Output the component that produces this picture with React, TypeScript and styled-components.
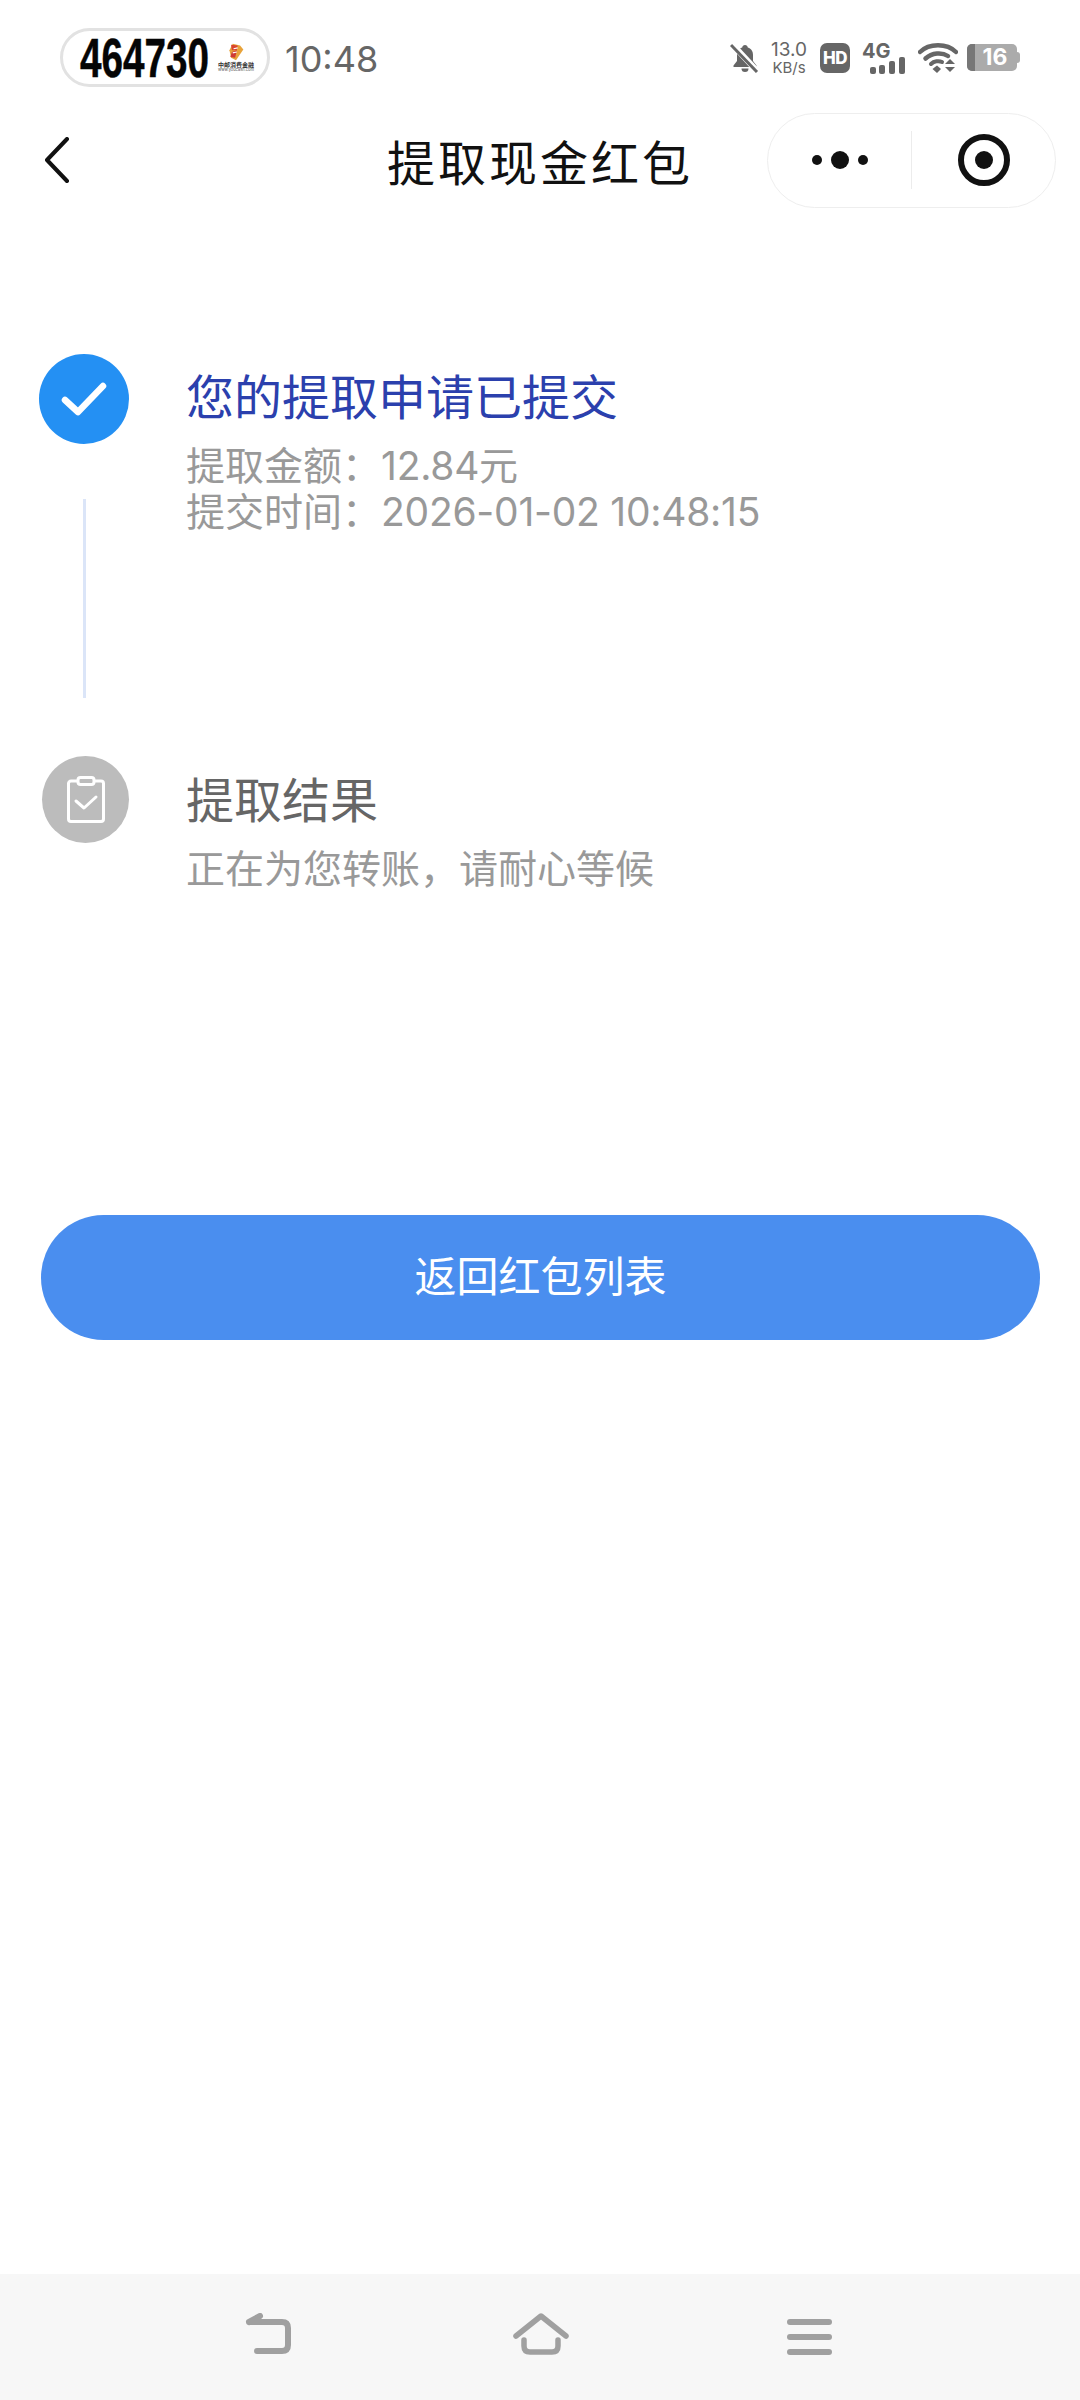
import styled, { createGlobalStyle } from "styled-components";

const GlobalStyle = createGlobalStyle`
  html, body {
    margin: 0;
    padding: 0;
    background: #ffffff;
  }
  * {
    box-sizing: border-box;
  }
`;

const App = () => {
  return (
    <Page>
      <GlobalStyle />
      <StatusBar>
        <CodeBadge>
          <CodeText>464730</CodeText>
          <BrandBlock>
            <svg width="18" height="18" viewBox="0 0 22 22">
              <path d="M7 1 L16 3 L20 8 L11 21 L5 18 L3 9 Z" fill="#e8a33a" />
              <path d="M5 2 L13 3 L12 9 L6 9 Z" fill="#d8432f" />
              <path d="M6 11 L12 9 L10 18 L4 17 Z" fill="#cf3a34" />
              <path d="M8 7 L13 6 M7 12 L12 11" stroke="#fff" strokeWidth="1.4" />
            </svg>
            <BrandName>中邮消费金融</BrandName>
            <BrandUrl>www.youcash.com</BrandUrl>
          </BrandBlock>
        </CodeBadge>
        <Clock>10:48</Clock>
        <StatusIcons>
          <svg width="30" height="30" viewBox="0 0 30 30">
            <path d="M15 2c-1.6 0-2.6 1-2.8 2.4C8.400 5.500 7 8.500 7 12v6l-3.500 4.500V24h23v-1.500L23 18v-6c0-3.500-1.400-6.500-5.200-7.600C17.600 3 16.600 2 15 2z" fill="#666" />
            <path d="M11.500 25.500h7a3.500 3.500 0 0 1-7 0z" fill="#666" />
            <path d="M2 1 L28 29" stroke="#fff" strokeWidth="6" />
            <path d="M1 2 L27 29" stroke="#666" strokeWidth="3" />
          </svg>
          <Speed>
            <SpeedValue>13.0</SpeedValue>
            <SpeedUnit>KB/s</SpeedUnit>
          </Speed>
          <HdBadge>HD</HdBadge>
          <Network>
            <NetworkLabel>4G</NetworkLabel>
            <svg width="36" height="17" viewBox="0 0 36 17">
              <rect x="0" y="10" width="6" height="7" rx="2" fill="#666" />
              <rect x="9" y="8" width="6" height="9" rx="2" fill="#666" />
              <rect x="19" y="4" width="6" height="13" rx="2" fill="#666" />
              <rect x="29" y="0" width="6" height="17" rx="2" fill="#666" />
            </svg>
          </Network>
          <svg width="40" height="30" viewBox="0 0 40 30">
            <path d="M2 9 C11 0 29 0 38 9" fill="none" stroke="#666" strokeWidth="4.500" strokeLinecap="round" />
            <path d="M7.500 15.500 C14 9.500 24 9 30 13" fill="none" stroke="#666" strokeWidth="4.500" strokeLinecap="round" />
            <path d="M13 21 C16 18 21 17.500 24 19" fill="none" stroke="#666" strokeWidth="4" strokeLinecap="round" />
            <path d="M14.500 26 L19 22.500 L23 26 L19 30 Z" fill="#666" />
            <path d="M27 21 L32 16 L37 21 Z" fill="#666" />
            <path d="M27 24 L37 24 L32 29 Z" fill="#666" />
          </svg>
          <Battery>
            <BatteryLevel />
            <BatteryText>16</BatteryText>
            <BatteryCap />
          </Battery>
        </StatusIcons>
      </StatusBar>

      <NavBar>
        <BackButton>
          <svg width="26" height="46" viewBox="0 0 26 46">
            <path d="M23 2 L3 23 L23 44" fill="none" stroke="#111" strokeWidth="4" strokeLinecap="round" strokeLinejoin="round" />
          </svg>
        </BackButton>
        <NavTitle>提取现金红包</NavTitle>
        <Capsule>
          <CapsuleSlot>
            <svg width="58" height="20" viewBox="0 0 58 20">
              <circle cx="6" cy="10" r="5" fill="#111" />
              <circle cx="29" cy="10" r="9" fill="#111" />
              <circle cx="52" cy="10" r="5" fill="#111" />
            </svg>
          </CapsuleSlot>
          <CapsuleDivider />
          <CapsuleSlot>
            <svg width="54" height="54" viewBox="0 0 54 54">
              <circle cx="27" cy="27" r="23" fill="none" stroke="#111" strokeWidth="6" />
              <circle cx="27" cy="27" r="9" fill="#111" />
            </svg>
          </CapsuleSlot>
        </Capsule>
      </NavBar>

      <Steps>
        <Step>
          <Marker>
            <MarkerCircle $size={90} $bg="#2490f3">
              <svg width="46" height="36" viewBox="0 0 46 36">
                <path d="M4 19 L17 31 L42 5" fill="none" stroke="#fff" strokeWidth="6.500" strokeLinecap="round" strokeLinejoin="round" />
              </svg>
            </MarkerCircle>
            <Rail />
          </Marker>
          <StepBody $top={13}>
            <StepTitle $color="#2b40ad">您的提取申请已提交</StepTitle>
            <StepLine>提取金额：<StepValue>12.84元</StepValue></StepLine>
            <StepLine>提交时间：<StepValue>2026-01-02 10:48:15</StepValue></StepLine>
          </StepBody>
        </Step>
        <Step>
          <Marker>
            <MarkerCircle $size={87} $bg="#bcbcbc">
              <svg width="38" height="48" viewBox="0 0 38 48">
                <path d="M11 5 H4 a2.500 2.500 0 0 0 -2.500 2.500 V43 a2.500 2.500 0 0 0 2.500 2.500 H34 a2.500 2.500 0 0 0 2.500 -2.500 V7.500 a2.500 2.500 0 0 0 -2.500 -2.500 H27" fill="none" stroke="#fff" strokeWidth="3" />
                <rect x="11" y="1.500" width="16" height="7" rx="2.500" fill="none" stroke="#fff" strokeWidth="3" />
                <path d="M9 25 L17 32 L29 21" fill="none" stroke="#fff" strokeWidth="3" strokeLinecap="round" strokeLinejoin="round" />
              </svg>
            </MarkerCircle>
          </Marker>
          <StepBody $top={14}>
            <StepTitle $color="#666666">提取结果</StepTitle>
            <StepLine>正在为您转账，请耐心等候</StepLine>
          </StepBody>
        </Step>
      </Steps>

      <BackToList>返回红包列表</BackToList>

      <SystemNav>
        <svg width="50" height="44" viewBox="0 0 50 44">
          <path d="M4 9 L15 3 M4 9 H37 Q43 9 43 15 V32 Q43 38 37 38 H12" fill="none" stroke="#a0a0a0" strokeWidth="6" strokeLinecap="round" strokeLinejoin="round" />
        </svg>
        <svg width="58" height="44" viewBox="0 0 58 44">
          <path d="M4 23 L29 3 L54 23" fill="none" stroke="#a0a0a0" strokeWidth="5.500" strokeLinecap="round" strokeLinejoin="round" />
          <path d="M12 27 V33 Q12 39 18 39 H40 Q46 39 46 33 V27" fill="none" stroke="#a0a0a0" strokeWidth="5.500" strokeLinecap="round" strokeLinejoin="round" />
        </svg>
        <MenuIcon>
          <MenuBar />
          <MenuBar />
          <MenuBar />
        </MenuIcon>
      </SystemNav>
    </Page>
  );
};

const fontStack = `Inter, "Noto Sans CJK SC", sans-serif`;

const Page = styled.div`
  width: 1080px;
  height: 2400px;
  display: flex;
  flex-direction: column;
  background: #ffffff;
  font-family: ${fontStack};
  overflow: hidden;
`;

const StatusBar = styled.div`
  height: 112px;
  padding: 28px 60px 25px 60px;
  display: flex;
  align-items: center;
`;

const CodeBadge = styled.div`
  width: 210px;
  height: 59px;
  border: 3px solid #e2e2e2;
  border-radius: 30px;
  display: flex;
  align-items: center;
  padding-left: 17px;
`;

const CodeText = styled.span`
  width: 127px;
  display: block;
  font-family: "Liberation Sans", sans-serif;
  font-weight: 700;
  font-size: 56px;
  line-height: 54px;
  color: #050505;
  -webkit-text-stroke: 0.5px #050505;
  transform: scaleX(0.69);
  transform-origin: left center;
  white-space: nowrap;
`;

const BrandBlock = styled.div`
  margin-left: 10px;
  width: 38px;
  display: flex;
  flex-direction: column;
  align-items: center;
  line-height: 1;
`;

const BrandName = styled.span`
  font-size: 6px;
  line-height: 7px;
  font-weight: 700;
  color: #333;
  white-space: nowrap;
`;

const BrandUrl = styled.span`
  font-size: 4px;
  line-height: 4px;
  color: #555;
  white-space: nowrap;
`;

const Clock = styled.span`
  margin-left: 15px;
  padding-top: 2px;
  font-size: 36px;
  color: #666666;
`;

const StatusIcons = styled.div`
  margin-left: auto;
  display: flex;
  align-items: center;
`;

const Speed = styled.div`
  margin-left: 11px;
  width: 36px;
  display: flex;
  flex-direction: column;
  align-items: center;
  color: #666;
`;

const SpeedValue = styled.span`
  font-size: 19px;
  line-height: 19px;
`;

const SpeedUnit = styled.span`
  font-size: 15px;
  line-height: 17px;
`;

const HdBadge = styled.div`
  margin-left: 13px;
  width: 30px;
  height: 30px;
  border-radius: 7px;
  background: #666;
  color: #fff;
  font-size: 17px;
  font-weight: 800;
  line-height: 30px;
  text-align: center;
  letter-spacing: -0.5px;
`;

const Network = styled.div`
  margin-left: 12px;
  margin-right: 12px;
  width: 44px;
  height: 32px;
  display: flex;
  flex-direction: column;
  align-items: flex-start;
  position: relative;
  svg {
    position: absolute;
    right: 0;
    bottom: 0;
  }
`;

const NetworkLabel = styled.span`
  font-size: 20px;
  line-height: 18px;
  font-weight: 700;
  color: #666;
`;

const Battery = styled.div`
  margin-left: 9px;
  margin-right: 3px;
  width: 50px;
  height: 27px;
  position: relative;
  background: #ababab;
  border-radius: 5px;
  display: flex;
  align-items: center;
  justify-content: center;
`;

const BatteryLevel = styled.div`
  position: absolute;
  left: 0;
  top: 0;
  bottom: 0;
  width: 8px;
  background: #777;
  border-radius: 5px 0 0 5px;
`;

const BatteryText = styled.span`
  font-size: 23px;
  font-weight: 700;
  color: #fff;
  line-height: 27px;
  margin-left: 6px;
`;

const BatteryCap = styled.div`
  position: absolute;
  right: -3px;
  top: 8px;
  width: 3px;
  height: 11px;
  background: #ababab;
  border-radius: 0 3px 3px 0;
`;

const NavBar = styled.div`
  height: 96px;
  padding: 0 24px 0 44px;
  display: flex;
  align-items: center;
  position: relative;
`;

const BackButton = styled.div`
  display: flex;
  align-items: center;
`;

const NavTitle = styled.h1`
  position: absolute;
  left: 0;
  right: 0;
  margin: 0;
  text-align: center;
  font-size: 48px;
  font-weight: 400;
  color: #111111;
  letter-spacing: 3px;
`;

const Capsule = styled.div`
  margin-left: auto;
  width: 289px;
  height: 95px;
  border: 1.500px solid #eeeeee;
  border-radius: 48px;
  display: flex;
  align-items: center;
  position: relative;
`;

const CapsuleSlot = styled.div`
  flex: 1;
  display: flex;
  align-items: center;
  justify-content: center;
`;

const CapsuleDivider = styled.div`
  width: 1px;
  height: 58px;
  background: #ececec;
`;

const Steps = styled.div`
  margin-top: 146px;
  padding-left: 39px;
  display: flex;
  flex-direction: column;
`;

const Step = styled.div`
  display: flex;
  align-items: flex-start;
`;

const Marker = styled.div`
  width: 90px;
  display: flex;
  flex-direction: column;
  align-items: flex-end;
`;

const MarkerCircle = styled.div<{ $size: number; $bg: string }>`
  width: ${(p) => p.$size}px;
  height: ${(p) => p.$size}px;
  border-radius: 50%;
  background: ${(p) => p.$bg};
  display: flex;
  align-items: center;
  justify-content: center;
`;

const Rail = styled.div`
  width: 3px;
  height: 199px;
  margin: 55px 43px 58px 0;
  background: #dbe5f8;
`;

const StepBody = styled.div<{ $top: number }>`
  margin-left: 57px;
  padding-top: ${(p) => p.$top}px;
  display: flex;
  flex-direction: column;
`;

const StepTitle = styled.div<{ $color: string }>`
  font-size: 48px;
  line-height: 62px;
  color: ${(p) => p.$color};
  margin-bottom: 14px;
`;

const StepLine = styled.div`
  font-size: 39px;
  line-height: 46px;
  color: #999999;
`;

const StepValue = styled.span`
  letter-spacing: -0.25px;
`;

const BackToList = styled.button`
  margin: 323px 0 0 41px;
  width: 999px;
  height: 125px;
  padding: 0 0 8px;
  border: none;
  border-radius: 63px;
  background: #4a8eef;
  color: #ffffff;
  font-family: ${fontStack};
  font-size: 42px;
`;

const SystemNav = styled.div`
  margin-top: auto;
  height: 126px;
  background: #f7f7f7;
  padding: 39px 248px 0 245px;
  display: flex;
  align-items: flex-start;
  justify-content: space-between;
`;

const MenuIcon = styled.div`
  width: 45px;
  padding-top: 6px;
  display: flex;
  flex-direction: column;
  gap: 9px;
`;

const MenuBar = styled.div`
  height: 6px;
  border-radius: 3px;
  background: #a0a0a0;
`;

export default App;
